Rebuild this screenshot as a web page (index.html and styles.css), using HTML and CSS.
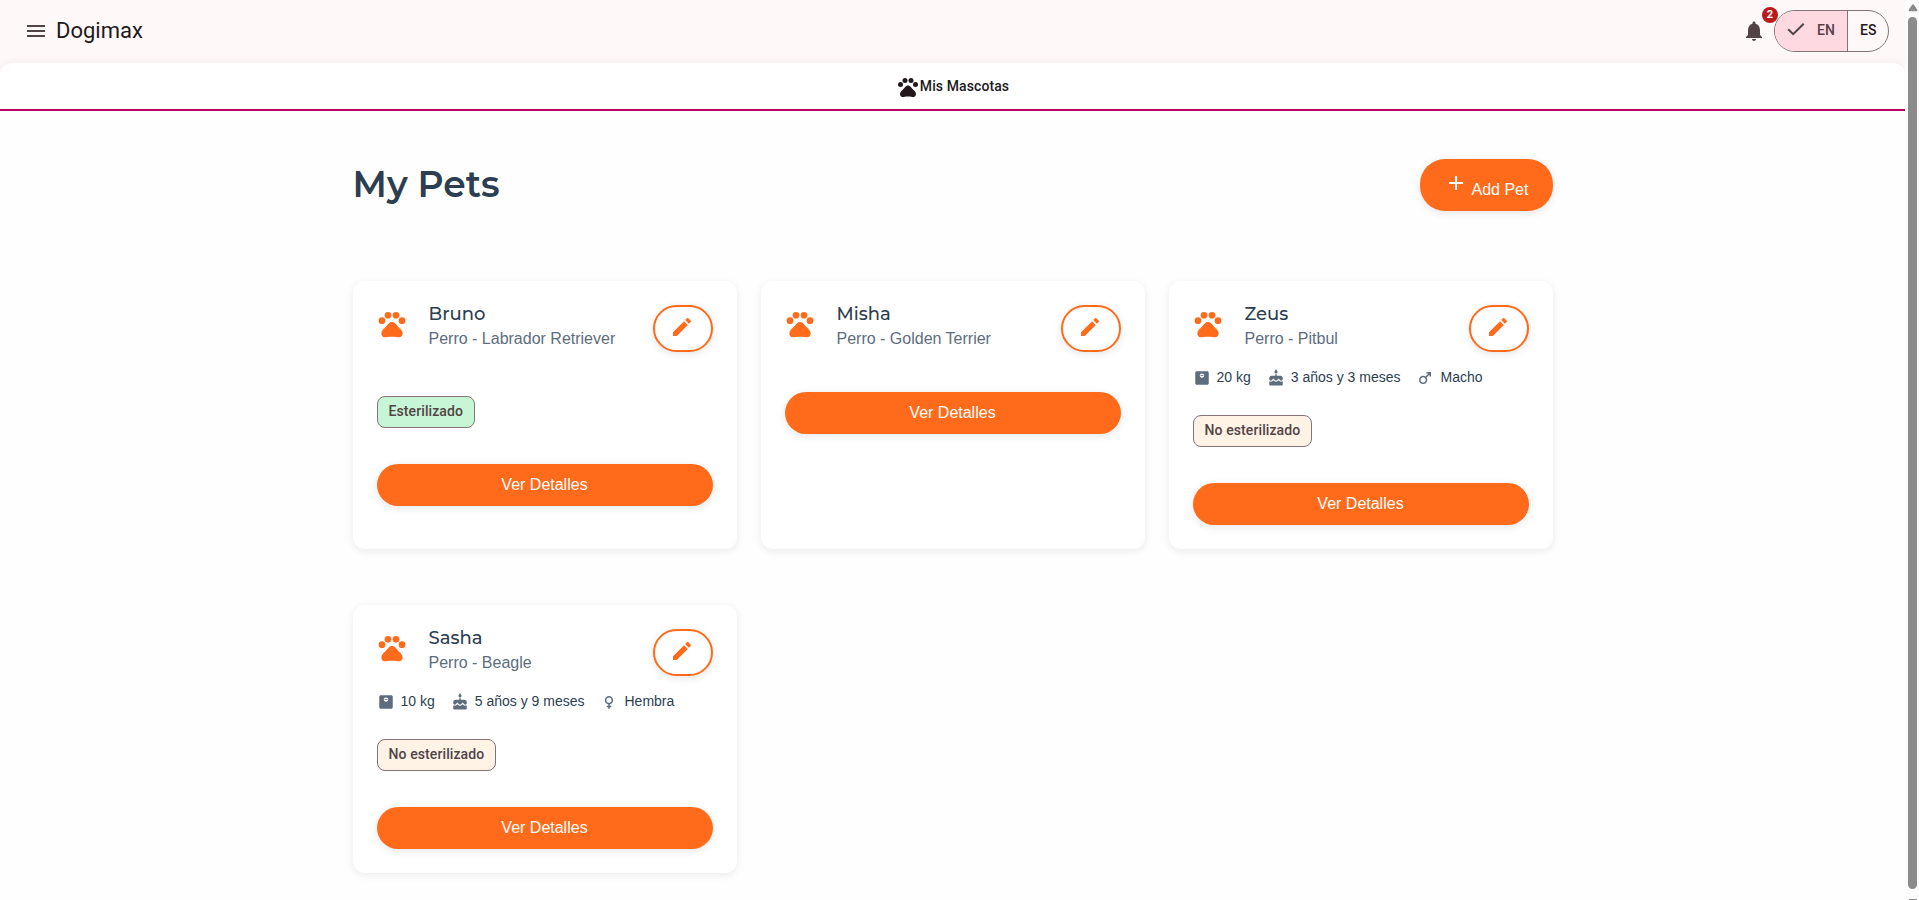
FILE: index.html
```html
<!DOCTYPE html>
<html lang="es">
<head>
<meta charset="utf-8">
<title>Dogimax</title>
<link rel="stylesheet" href="styles.css">
</head>
<body>
<svg class="sprite" aria-hidden="true">
  <symbol id="paw" viewBox="0 0 24 24"><circle cx="4.5" cy="9.5" r="2.5"/><circle cx="9" cy="5.5" r="2.5"/><circle cx="15" cy="5.5" r="2.5"/><circle cx="19.5" cy="9.5" r="2.5"/><path d="M17.34 14.86c-.87-1.02-1.6-1.89-2.48-2.91-.46-.54-1.05-1.08-1.75-1.32-.11-.04-.22-.07-.33-.09-.25-.04-.52-.04-.78-.04s-.53 0-.79.05c-.11.02-.22.05-.33.09-.7.24-1.28.78-1.75 1.32-.87 1.02-1.6 1.89-2.48 2.91-1.31 1.31-2.92 2.76-2.62 4.79.29 1.02 1.02 2.03 2.33 2.32.73.15 3.06-.44 5.54-.44h.18c2.48 0 4.81.58 5.54.44 1.31-.29 2.04-1.31 2.33-2.32.31-2.04-1.3-3.49-2.61-4.8z"/></symbol>
  <symbol id="pencil" viewBox="0 0 24 24"><path d="M3 17.25V21h3.75L17.81 9.94l-3.75-3.75L3 17.25zM20.71 7.04c.39-.39.39-1.02 0-1.41l-2.34-2.34c-.39-.39-1.02-.39-1.41 0l-1.83 1.83 3.75 3.75 1.83-1.83z"/></symbol>
  <symbol id="weight" viewBox="0 0 24 24"><path fill-rule="evenodd" d="M19 3H5c-1.100 0-2 .9-2 2v14c0 1.100.9 2 2 2h14c1.100 0 2-.9 2-2V5c0-1.100-.9-2-2-2zM12 11.500c-1.660 0-3-1.340-3-2.800s1.340-2.700 3-2.700 3 1.240 3 2.700-1.340 2.800-3 2.800z"/><path d="M10 8.300h4v1.100h-4z"/></symbol>
  <symbol id="cake" viewBox="0 0 24 24"><path d="M12 6c1.110 0 2-.9 2-2 0-.38-.1-.73-.29-1.030L12 0l-1.710 2.970c-.19.3-.29.65-.29 1.030 0 1.100.9 2 2 2zm4.600 9.990l-1.070-1.070-1.080 1.070c-1.300 1.300-3.580 1.310-4.890 0l-1.070-1.070-1.090 1.070C6.750 16.640 5.880 17 4.960 17c-.73 0-1.400-.23-1.960-.61V21c0 .55.45 1 1 1h16c.55 0 1-.45 1-1v-4.610c-.56.38-1.230.61-1.960.61-.92 0-1.790-.36-2.440-1.010zM18 9h-5V7h-2v2H6c-1.660 0-3 1.340-3 3v1.540c0 1.080.88 1.960 1.960 1.960.52 0 1.020-.2 1.380-.57l2.140-2.130 2.130 2.130c.74.74 2.030.74 2.770 0l2.140-2.130 2.130 2.130c.37.37.86.57 1.380.57 1.080 0 1.960-.88 1.960-1.960V12C21 10.340 19.660 9 18 9z"/></symbol>
  <symbol id="male" viewBox="0 0 24 24"><path d="M9.500 11c1.930 0 3.500 1.570 3.500 3.500S11.430 18 9.500 18 6 16.430 6 14.500 7.570 11 9.500 11zm0-2C6.460 9 4 11.460 4 14.500S6.460 20 9.500 20s5.500-2.460 5.500-5.500c0-1.160-.36-2.230-.97-3.120L18 7.420V10h2V4h-6v2h2.580l-3.970 3.970C11.730 9.360 10.660 9 9.500 9z"/></symbol>
  <symbol id="female" viewBox="0 0 24 24"><path d="M17.500 9.500C17.500 6.460 15.040 4 12 4S6.500 6.460 6.500 9.500c0 2.700 1.940 4.930 4.500 5.400V17H9v2h2v2h2v-2h2v-2h-2v-2.100c2.560-.47 4.500-2.700 4.500-5.400zm-9 0C8.500 7.570 10.070 6 12 6s3.500 1.570 3.500 3.500S13.930 13 12 13s-3.500-1.570-3.500-3.500z"/></symbol>
</svg>

<div class="app">
  <div class="page">
    <header class="topbar">
      <svg class="menu-icon" viewBox="0 0 24 24"><path d="M3 18h18v-2H3v2zm0-5h18v-2H3v2zm0-7v2h18V6H3z"/></svg>
      <span class="brand">Dogimax</span>
      <div class="bell">
        <svg viewBox="0 0 24 24"><path d="M12 22c1.100 0 2-.9 2-2h-4c0 1.100.89 2 2 2zm6-6v-5c0-3.070-1.640-5.640-4.500-6.320V4c0-.83-.67-1.500-1.500-1.500s-1.500.67-1.500 1.500v.68C7.630 5.360 6 7.920 6 11v5l-2 2v1h16v-1l-2-2z"/></svg>
        <span class="badge">2</span>
      </div>
      <div class="lang">
        <div class="lang-item lang-on"><svg viewBox="0 0 18 18"><path d="M1.200 8.200 6.200 13.200 16.700 2.700"/></svg><span>EN</span></div>
        <div class="lang-item">ES</div>
      </div>
    </header>
    <nav class="tabs"><svg><use href="#paw"/></svg><span>Mis Mascotas</span></nav>

    <main class="content">
      <div class="heading">
        <h1>My Pets</h1>
        <button class="add"><svg viewBox="0 0 24 24"><path d="M19 13h-6v6h-2v-6H5v-2h6V5h2v6h6v2z"/></svg><span>Add Pet</span></button>
      </div>
      <div class="grid">
        <article class="card">
          <div class="card-head">
            <svg class="avatar"><use href="#paw"/></svg>
            <div class="who"><h2>Bruno</h2><p>Perro - Labrador Retriever</p></div>
            <button class="edit"><svg><use href="#pencil"/></svg></button>
          </div>
          <div class="meta"></div>
          <div class="chips"><span class="chip chip-yes">Esterilizado</span></div>
          <button class="details">Ver Detalles</button>
        </article>
        <article class="card">
          <div class="card-head">
            <svg class="avatar"><use href="#paw"/></svg>
            <div class="who"><h2>Misha</h2><p>Perro - Golden Terrier</p></div>
            <button class="edit"><svg><use href="#pencil"/></svg></button>
          </div>
          <div class="meta"></div>
          <button class="details">Ver Detalles</button>
        </article>
        <article class="card">
          <div class="card-head">
            <svg class="avatar"><use href="#paw"/></svg>
            <div class="who"><h2>Zeus</h2><p>Perro - Pitbul</p></div>
            <button class="edit"><svg><use href="#pencil"/></svg></button>
          </div>
          <div class="meta">
            <span><svg><use href="#weight"/></svg>20 kg</span>
            <span><svg><use href="#cake"/></svg>3 años y 3 meses</span>
            <span><svg><use href="#male"/></svg>Macho</span>
          </div>
          <div class="chips"><span class="chip chip-no">No esterilizado</span></div>
          <button class="details">Ver Detalles</button>
        </article>
        <article class="card">
          <div class="card-head">
            <svg class="avatar"><use href="#paw"/></svg>
            <div class="who"><h2>Sasha</h2><p>Perro - Beagle</p></div>
            <button class="edit"><svg><use href="#pencil"/></svg></button>
          </div>
          <div class="meta">
            <span><svg><use href="#weight"/></svg>10 kg</span>
            <span><svg><use href="#cake"/></svg>5 años y 9 meses</span>
            <span><svg><use href="#female"/></svg>Hembra</span>
          </div>
          <div class="chips"><span class="chip chip-no">No esterilizado</span></div>
          <button class="details">Ver Detalles</button>
        </article>
      </div>
    </main>
  </div>
  <div class="scrollbar">
    <svg class="arrow" viewBox="0 0 10 8"><path d="M4.100.8Q5-.4 5.900.8L9.300 5.800Q9.700 7.200 8.300 7.200H1.700Q.3 7.200.7 5.800z"/></svg>
    <div class="thumb"></div>
    <div class="arrow-end"></div>
  </div>
</div>
</body>
</html>
```
FILE: styles.css
```css
* { box-sizing: border-box; }
html, body { margin: 0; height: 100%; overflow: hidden; }
body { background: #fefefe; font-family: "Liberation Sans", Arial, sans-serif; }
h1, h2, p { margin: 0; }
button { font: inherit; border: 0; margin: 0; padding: 0; }
svg { display: block; fill: currentColor; flex: none; }
.sprite { display: none; }

.app { display: flex; height: 900px; }
.page { flex: 1; min-width: 0; background: linear-gradient(#fff8f8 0 80px, #fefefe 80px); }

.topbar { display: flex; align-items: center; height: 63px; padding: 0 16px 2px 24px; color: #524347; font-family: Roboto, sans-serif; }
.menu-icon { width: 24px; height: 24px; }
.brand { margin-left: 8px; font-size: 22px; line-height: 28px; color: #22191c; }
.bell { position: relative; margin-left: auto; }
.bell svg { width: 24px; height: 24px; }
.badge { position: absolute; left: 20px; top: -12px; width: 16px; height: 16px; border-radius: 50%; background: #ba1a1a; color: #fff; font-size: 11px; line-height: 15px; font-weight: 700; text-align: center; }
.lang { display: flex; width: 115px; height: 42px; margin-left: 8px; border: 1px solid #847377; border-radius: 21px; overflow: hidden; font-size: 14px; font-weight: 500; letter-spacing: .1px; color: #22191c; }
.lang-item { display: flex; align-items: center; padding: 0 12px 1px; }
.lang-item + .lang-item { flex: 1; border-left: 1px solid #847377; }
.lang-on { gap: 12px; background: #ffd9e2; color: #5c3f47; }
.lang-on svg { width: 18px; height: 18px; fill: none; stroke: #524347; stroke-width: 2; }

.tabs { display: flex; align-items: center; justify-content: center; height: 48px; border-bottom: 2px solid #ba0060; border-radius: 12px 12px 0 0; background: #fff; box-shadow: 0 -1px 8px rgba(0, 0, 0, .05); color: #22191c; font: 500 14px/20px Roboto, sans-serif; letter-spacing: .1px; clip-path: inset(-12px 0 0 0); }
.tabs svg { width: 24px; height: 24px; margin-top: 1px; }

.content { width: 1200px; margin: 0 auto; padding-top: 48px; }
.heading { display: flex; justify-content: space-between; align-items: center; height: 52px; margin-bottom: 70px; }
h1 { font: 600 36px/44px Montserrat, Inter, sans-serif; margin-bottom: 2px; color: #2c3e50; }
.add { display: flex; align-items: flex-start; width: 133px; height: 52px; padding: 12px 24px; border-radius: 25px; background: #ff6b1a; color: #fff; font-size: 16px; box-shadow: 0 2px 8px rgba(0, 0, 0, .1); }
.add svg { width: 24px; height: 24px; }
.add span { margin: 10px 0 0 4px; line-height: 18px; white-space: nowrap; }

.grid { display: grid; grid-template-columns: repeat(3, 384px); gap: 56px 24px; }
.card { height: 268px; padding: 24px; border-radius: 12px; background: #fff; box-shadow: 0 2px 8px rgba(0, 0, 0, .08); }
.card-head { display: flex; height: 47px; }
.avatar { width: 32px; height: 32px; margin: 3px .5px 0 -.5px; color: #ff6b1a; }
.who { flex: 1; margin-left: 20px; }
h2 { font: 500 18px/20px Montserrat, Inter, sans-serif; margin-top: -1px; color: #2c3e50; }
.who p { margin-top: 6px; font-size: 16px; line-height: 18px; color: #5d6d7e; }
.edit { display: flex; justify-content: center; width: 60px; height: 47px; padding: 8px 1px 0 0; border: 2px solid #ff6b1a; border-radius: 24px; background: #fff; color: #ff6b1a; box-shadow: 0 2px 8px rgba(0, 0, 0, .1); }
.edit svg { width: 24px; height: 24px; }
.meta { display: flex; gap: 16px; padding-top: 16px; font-size: 14px; line-height: 19px; color: #2c3e50; }
.meta span { display: flex; align-items: center; }
.meta svg { width: 18px; height: 18px; margin: 1px 6px 0 0; color: #5d6d7e; }
.chips { display: flex; padding-top: 28px; margin-bottom: -4px; }
.chip { height: 32px; padding: 0 11px; border: 1px solid #847377; border-radius: 8px; font: 500 14px/29px Roboto, sans-serif; letter-spacing: .1px; color: #524347; }
.chip-yes { background: #c6f6d5; }
.chip-no { background: #fff3e6; }
.details { display: block; width: 100%; height: 42px; margin-top: 40px; border-radius: 21px; background: #ff6b1a; color: #fff; font-size: 16px; line-height: 40px; box-shadow: 0 2px 8px rgba(0, 0, 0, .1); }
.meta:empty + .details { margin-top: 24px; }

.scrollbar { display: flex; flex-direction: column; align-items: center; width: 14px; height: 900px; padding-left: 1px; background: #fcfcfc; color: #8b8b8b; }
.arrow { width: 10px; height: 8px; margin-top: 4px; }
.thumb { width: 9px; height: 872px; margin-top: 5px; border-radius: 5px; background: #8b8b8b; }
.arrow-end { width: 8px; height: 1px; margin-top: 10px; background: #8b8b8b; }
```
